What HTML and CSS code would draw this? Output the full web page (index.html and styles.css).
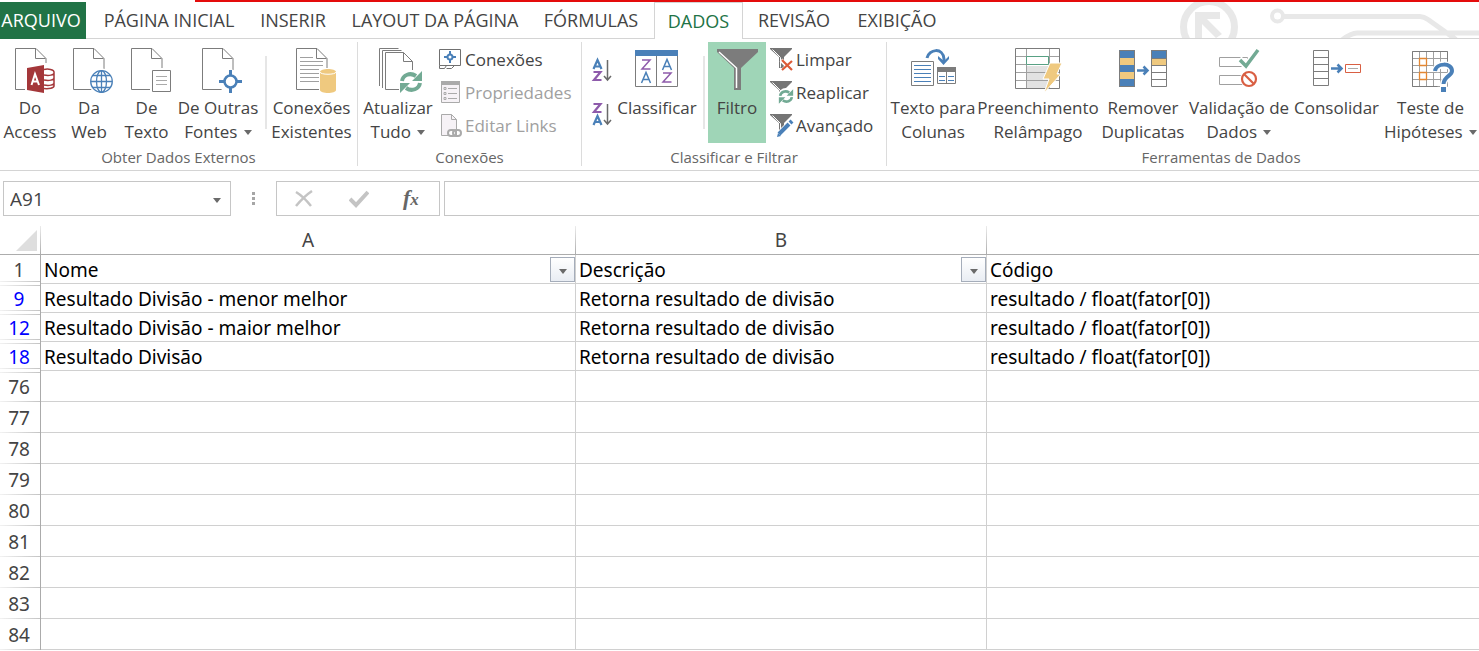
FILE: index.html
```html
<!DOCTYPE html>
<html lang="pt-BR">
<head>
<meta charset="utf-8">
<meta name="viewport" content="width=device-width, initial-scale=1">
<title>Planilha</title>
<link rel="stylesheet" href="styles.css">
</head>
<body>
<svg class="defs" aria-hidden="true">
  <defs>
    <g id="sheet"><path d="M.5 .5h20.500l10 10v31H.5z" fill="#fff" stroke="#7c7c7c"/><path d="M20.500 .5v10h10" fill="none" stroke="#7c7c7c"/></g>
    <g id="refresh"><path d="M-9-1C-8-7-1-10 5-6M9 1C8 7 1 10-5 6" fill="none" stroke="#72aa94" stroke-width="4"/><path d="M11-11v10H1zM-11 11V1H-1z" fill="#72aa94"/></g>
    <g id="funnel"><path d="M0 0h22v1l-8 8v11h-5V9L0 1z" fill="#757575"/><path d="M2.500 1.500l8 8v10" fill="none" stroke="#fff"/></g>
  </defs>
</svg>
<header>
  <div class="topline"></div>
  <nav class="tabs" aria-label="Guias">
    <button class="tab file">ARQUIVO</button>
    <button class="tab home">PÁGINA INICIAL</button>
    <button class="tab insert">INSERIR</button>
    <button class="tab layout">LAYOUT DA PÁGINA</button>
    <button class="tab formulas">FÓRMULAS</button>
    <button class="tab active">DADOS</button>
    <button class="tab review">REVISÃO</button>
    <button class="tab view">EXIBIÇÃO</button>
    <svg class="circuit" width="300" height="36" viewBox="1179 2 300 36" fill="none" stroke="#e8e8e8" aria-hidden="true">
      <circle cx="1209" cy="27" r="25.500" stroke-width="7"/>
      <path d="M1195 12h25v7h-13l15 15-6 4-14-14v14h-7z" fill="#e8e8e8" stroke="none"/>
      <circle cx="1277.500" cy="16" r="5.500" stroke-width="4"/>
      <path d="M1284 16.500h136q4 0 8 3l28 20M1479 33h-122q-6 0-15 7" stroke-width="5"/>
    </svg>
  </nav>
  <div class="ribbon">
    <section class="group external">
      <div class="tools">
        <button class="big access"><svg width="60" height="54" viewBox="0 42 60 54"><use href="#sheet" x="15" y="48"/><path d="M25 63h32v32H25z" fill="#fff"/><path d="M44 69.500c4-1 10 0 10 2.500v14c0 2-5 3-10 2.500M44 75c5 1 10 0 10-2M44 80c5 1 10 0 10-2M44 85c5 1 10 0 10-2" fill="none" stroke="#a4373a" stroke-width="1.500"/><path d="M27 68l17-3v28l-17-3z" fill="#a4373a"/><path d="M31.500 85l3.500-11 4 11M32.500 81.500h5" fill="none" stroke="#fff" stroke-width="2"/></svg><span>Do<br>Access</span></button>
        <button class="big web"><svg width="58" height="54" viewBox="60 42 58 54"><use href="#sheet" x="73" y="48"/><circle cx="101.500" cy="81.500" r="13" fill="#fff"/><g fill="none" stroke="#4a80b8" stroke-width="1.300"><circle cx="101.500" cy="81.500" r="10.800"/><ellipse cx="101.500" cy="81.500" rx="5" ry="10.800"/><path d="M101.500 71v21M91 81.500h21M93 75.500h17M93 87.500h17"/></g></svg><span>Da<br>Web</span></button>
        <button class="big text"><svg width="57" height="54" viewBox="118 42 57 54"><use href="#sheet" x="131" y="48"/><path d="M150 68h23v26h-23z" fill="#fff"/><path d="M152.500 70.500h18v21h-18z" fill="#fff" stroke="#7c7c7c"/><path d="M156 76.500h11M156 80.500h11M156 84.500h11" stroke="#aaa"/></svg><span>De<br>Texto</span></button>
        <button class="big others"><svg width="86" height="54" viewBox="175 42 86 54"><use href="#sheet" x="202" y="48"/><circle cx="230.500" cy="81.500" r="12" fill="#fff"/><circle cx="230.500" cy="81.500" r="6" fill="none" stroke="#4a80b8" stroke-width="2.500"/><path d="M230.500 70v6M230.500 87v6M219 81.500h6M236 81.500h6" stroke="#4a80b8" stroke-width="3"/></svg><span>De Outras<br>Fontes <i class="caret"></i></span></button>
        <div class="divider"></div>
        <button class="big existing"><svg width="83" height="54" viewBox="270 42 83 54"><use href="#sheet" x="296" y="48"/><path d="M300 57.500h13M300 61.500h23M300 65.500h23M300 69.500h20M300 73.500h20M300 77.500h20M300 81.500h20" stroke="#a0a0a0"/><path d="M319 68h19v26h-19z" fill="#fff"/><path d="M320 72v18c0 4 16 4 16 0V72c0-4-16-4-16 0z" fill="#efc97f"/><path d="M320 72c0 3 16 3 16 0" fill="none" stroke="#fff"/></svg><span>Conexões<br>Existentes</span></button>
      </div>
      <h2>Obter Dados Externos</h2>
    </section>
    <section class="group connections">
      <div class="tools">
        <button class="big update"><svg width="80" height="54" viewBox="358 42 80 54"><g fill="#fff" stroke="#7c7c7c"><path d="M379.500 86V48.500h19"/><path d="M382.500 88V50.500h19"/><path d="M403.500 52.500l9 9v28h-27v-37z"/><path d="M403.500 52.500v9h9" fill="none"/></g><path d="M399 70h25v25h-25z" fill="#fff"/><use href="#refresh" x="411" y="82"/></svg><span>Atualizar<br>Tudo <i class="caret"></i></span></button>
        <div class="stack">
          <button class="small"><svg width="24" height="24" viewBox="439 48 24 24"><path d="M439.500 49.500h21v16h-21zM439.500 65.500v3h5l2-3m0 3h5l3-3" fill="none" stroke="#707070"/><circle cx="450" cy="57" r="2.500" fill="none" stroke="#4a80b8" stroke-width="2"/><path d="M450 51v3M450 60v3M444 57h3M453 57h3" stroke="#4a80b8" stroke-width="2"/></svg><span>Conexões</span></button>
          <button class="small" disabled><svg width="24" height="24" viewBox="439 81 24 24"><path d="M441.500 82.500h18v20h-18z" fill="#f6f2f6" stroke="#aaa"/><path d="M441 81h19v4h-19z" fill="#aaa"/><path d="M448 88.500h9M448 93.500h9M448 98.500h9" stroke="#aaa"/><path d="M444 87.500h2v2h-2zM444 92.500h2v2h-2zM444 97.500h2v2h-2z" fill="none" stroke="#aaa"/></svg><span>Propriedades</span></button>
          <button class="small" disabled><svg width="24" height="24" viewBox="439 114 24 24"><path d="M441.500 114.500h10l5 5v16h-15z" fill="#f6f2f6" stroke="#aaa"/><path d="M451.500 114.500v5h5" fill="none" stroke="#aaa"/><g fill="#fff" stroke="#aaa" stroke-width="2"><rect x="448" y="130" width="8" height="6" rx="3"/><rect x="453" y="130" width="8" height="6" rx="3" fill="none"/></g></svg><span>Editar Links</span></button>
        </div>
      </div>
      <h2>Conexões</h2>
    </section>
    <section class="group sorting">
      <div class="tools">
        <div class="order">
          <button aria-label="Classificar de A a Z"><svg width="24" height="30" viewBox="590 56 24 30"><path d="M593.500 69l4-9 4 9M595 66.500h5" fill="none" stroke="#4a80b8" stroke-width="2.200"/><path d="M593.500 72h7l-6.500 8h7.500" fill="none" stroke="#8e5bab" stroke-width="2.200"/><path d="M607.500 60v20m-3.500-4l3.500 4 3.500-4" fill="none" stroke="#6a6a6a" stroke-width="1.500"/></svg></button>
          <button aria-label="Classificar de Z a A"><svg width="24" height="30" viewBox="590 100 24 30"><path d="M593.500 104h7l-6.500 8h7.500" fill="none" stroke="#8e5bab" stroke-width="2.200"/><path d="M593.500 125l4-9 4 9M595 122h5" fill="none" stroke="#4a80b8" stroke-width="2.200"/><path d="M607.500 104v20m-3.500-4l3.500 4 3.500-4" fill="none" stroke="#6a6a6a" stroke-width="1.500"/></svg></button>
        </div>
        <button class="big classify"><svg width="84" height="54" viewBox="615 42 84 54"><path d="M635.500 53.500h42v33h-42zM656.500 54v32" fill="#fff" stroke="#7c7c7c"/><path d="M635 50h43v6h-43z" fill="#4a80b8"/><g fill="none" stroke="#8e5bab" stroke-width="1.500"><path d="M642 60h8l-8 9h8.500M663 73h8l-8 9h8.500"/></g><g fill="none" stroke="#4a80b8" stroke-width="1.500"><path d="M641.500 83l4.500-10.500 4.500 10.500M643 79.500h6M662.500 70l4.500-10.500 4.500 10.500M664 66.500h6"/></g></svg><span>Classificar</span></button>
        <div class="divider"></div>
        <button class="big filter" aria-pressed="true"><svg width="58" height="54" viewBox="708 42 58 54"><path d="M717 49h41v3l-17 16v22h-7V68l-17-16z" fill="#7c7c7c"/><path d="M719 52l17.500 16v20" fill="none" stroke="#fff" stroke-width="1.500"/></svg><span>Filtro</span></button>
        <div class="stack">
          <button class="small"><svg width="24" height="24" viewBox="770 48 24 24"><use href="#funnel" x="770" y="48"/><path d="M781 60l12 12m0-12l-12 12" stroke="#fff" stroke-width="4"/><path d="M782 60l10 10m0-9l-10 9" stroke="#dc5b38" stroke-width="2.200"/></svg><span>Limpar</span></button>
          <button class="small"><svg width="24" height="24" viewBox="770 81 24 24"><use href="#funnel" x="770" y="81"/><circle cx="786" cy="96" r="8" fill="#fff"/><use href="#refresh" transform="translate(786 96.500) scale(.65)"/></svg><span>Reaplicar</span></button>
          <button class="small"><svg width="24" height="24" viewBox="770 114 24 24"><use href="#funnel" x="770" y="114"/><path d="M777 137l15-15" stroke="#fff" stroke-width="7"/><path d="M779 134l10-10" stroke="#4a80b8" stroke-width="4"/><path d="M790 123l2-2" stroke="#4a80b8" stroke-width="4"/><path d="M777 137l1-4 3 3z" fill="#4a80b8"/></svg><span>Avançado</span></button>
        </div>
      </div>
      <h2>Classificar e Filtrar</h2>
    </section>
    <section class="group data">
      <div class="tools">
        <button class="big columns"><svg width="92" height="54" viewBox="887 42 92 54"><path d="M911.500 61.500h22v24h-22z" fill="#fff" stroke="#7c7c7c"/><path d="M914 65.500h17M914 69.500h17M914 73.500h17M914 77.500h17M914 81.500h17" stroke="#4a80b8"/><path d="M937.500 68.500h18v15h-18zM946.500 70v13" fill="#fff" stroke="#7c7c7c"/><path d="M937 67h19v5h-19z" fill="#7c7c7c"/><path d="M939 76.500h6M948 76.500h6M939 80.500h6M948 80.500h6" stroke="#4a80b8"/><path d="M927 58c2-9 16-11 17 1v2" fill="none" stroke="#4a80b8" stroke-width="3"/><path d="M938 56l6 5 5-5v3l-5.500 6-5.500-6z" fill="#4a80b8"/></svg><span>Texto para<br>Colunas</span></button>
        <button class="big flash"><svg width="118" height="54" viewBox="979 42 118 54"><path d="M1015.500 48.500h44v40h-44z" fill="#fff" stroke="#7c7c7c"/><path d="M1027 66h22v22h-22z" fill="#e2e2e2"/><path d="M1026.500 49v39M1049.500 49v39M1016 56.500h43M1016 64.500h43M1016 72.500h43M1016 80.500h43" stroke="#a0a0a0"/><path d="M1026.500 56.500h22v8h-22z" fill="#fff" stroke="#58a184"/><path d="M1050 63h12l-5 11h4l-17 19 5-14h-6z" fill="#efc97f" stroke="#fff"/></svg><span>Preenchimento<br>Relâmpago</span></button>
        <button class="big dedupe"><svg width="92" height="54" viewBox="1097 42 92 54"><path d="M1119 50h16v8h-16zM1119 65h16v7h-16zM1119 79h16v8h-16zM1151 50h16v8h-16z" fill="#4a80b8"/><path d="M1119 58h16v7h-16zM1119 72h16v7h-16zM1151 58h16v7h-16z" fill="#efc97f"/><path d="M1119.500 50.500h15v36h-15zM1151.500 50.500h15v36h-15zM1151 58.500h16M1151 65.500h16M1151 72.500h16M1151 79.500h16" fill="none" stroke="#7c7c7c"/><path d="M1137 70.500h10m-3.500-4l4 4-4 4" fill="none" stroke="#4a80b8" stroke-width="2.500"/></svg><span>Remover<br>Duplicatas</span></button>
        <button class="big validate"><svg width="100" height="54" viewBox="1189 42 100 54"><path d="M1219.500 57.500h28v9h-28zM1219.500 75.500h28v9h-28z" fill="#fff" stroke="#a0a0a0"/><path d="M1239 59l7 7 13-16" fill="none" stroke="#fff" stroke-width="7"/><path d="M1240 60l6 6 12-16" fill="none" stroke="#72aa94" stroke-width="3.500"/><circle cx="1249" cy="79" r="9" fill="#fff"/><path d="M1244 74l10 10" stroke="#d95f43" stroke-width="2.200"/><circle cx="1249" cy="79" r="7" fill="none" stroke="#d95f43" stroke-width="2.200"/></svg><span>Validação de<br>Dados <i class="caret"></i></span></button>
        <button class="big consolidate"><svg width="95" height="54" viewBox="1289 42 95 54"><path d="M1313.500 50.500h15v35h-15zM1314 57.500h14M1314 64.500h14M1314 71.500h14M1314 78.500h14" fill="#fff" stroke="#7c7c7c"/><path d="M1331 68.500h10m-3.500-4l4 4-4 4" fill="none" stroke="#4a80b8" stroke-width="2.500"/><path d="M1345.500 64.500h15v8h-15z" fill="#fff" stroke="#d95f43"/><path d="M1348 68.500h10" stroke="#aaa"/></svg><span>Consolidar</span></button>
        <button class="big whatif"><svg width="93" height="54" viewBox="1384 42 93 54"><path d="M1412.500 51.500h35v35h-35zM1419.500 52v34M1426.500 52v34M1433.500 52v34M1440.500 52v34M1413 58.500h34M1413 65.500h34M1413 72.500h34M1413 79.500h34" fill="#fff" stroke="#a0a0a0"/><path d="M1447.500 62V51.500h-35v35h25" fill="none" stroke="#7c7c7c"/><path d="M1419.500 58.500h7v7h-7zM1419.500 72.500h7v7h-7z" fill="#fff" stroke="#e38732" stroke-width="1.300"/><path d="M1435 72c1-10 17-9 17-1 0 6-8 5-8.500 13v8" fill="none" stroke="#fff" stroke-width="7"/><path d="M1435 71c1-8 17-9 17 0 0 5-8 5-8.500 13" fill="none" stroke="#4a80b8" stroke-width="4"/><path d="M1441 87h5v5h-5z" fill="#4a80b8"/></svg><span>Teste de<br>Hipóteses <i class="caret"></i></span></button>
      </div>
      <h2>Ferramentas de Dados</h2>
    </section>
  </div>
</header>
<div class="formula-bar">
  <div class="name-box"><input aria-label="Caixa de nome" value="A91"><button aria-label="Abrir lista de nomes"><i class="caret"></i></button></div>
  <div class="grip"><i></i><i></i><i></i></div>
  <div class="actions">
    <button aria-label="Cancelar"><svg width="20" height="20" viewBox="0 0 20 20" fill="none" stroke="#c4c4c4" stroke-width="2.500"><path d="M2 3c5 3 11 9 15 14M18 2C12 6 7 11 2 17"/></svg></button>
    <button aria-label="Inserir"><svg width="20" height="20" viewBox="0 0 20 20" fill="none" stroke="#c4c4c4" stroke-width="4"><path d="M1 10l6 6L19 3"/></svg></button>
    <button class="fx" aria-label="Inserir função">f<sub>x</sub></button>
  </div>
  <input class="formula" aria-label="Barra de fórmulas">
</div>
<table class="grid">
  <colgroup><col class="c-num"><col class="c-a"><col class="c-b"><col></colgroup>
  <thead><tr><th class="corner"><svg width="21" height="21" viewBox="0 0 21 21"><path d="M21 0v21H0z" fill="#dedede"/></svg></th><th>A</th><th>B</th><th></th></tr></thead>
  <tbody>
    <tr class="short first"><th>1</th><td><div class="cell">Nome<button class="drop" aria-label="Filtrar Nome"><i class="caret"></i></button></div></td><td><div class="cell">Descrição<button class="drop" aria-label="Filtrar Descrição"><i class="caret"></i></button></div></td><td>Código</td></tr>
    <tr class="short found"><th>9</th><td>Resultado Divisão - menor melhor</td><td>Retorna resultado de divisão</td><td>resultado / float(fator[0])</td></tr>
    <tr class="short found"><th>12</th><td>Resultado Divisão - maior melhor</td><td>Retorna resultado de divisão</td><td>resultado / float(fator[0])</td></tr>
    <tr class="short found"><th>18</th><td>Resultado Divisão</td><td>Retorna resultado de divisão</td><td>resultado / float(fator[0])</td></tr>
    <tr class="after"><th>76</th><td></td><td></td><td></td></tr>
    <tr><th>77</th><td></td><td></td><td></td></tr>
    <tr><th>78</th><td></td><td></td><td></td></tr>
    <tr><th>79</th><td></td><td></td><td></td></tr>
    <tr><th>80</th><td></td><td></td><td></td></tr>
    <tr><th>81</th><td></td><td></td><td></td></tr>
    <tr><th>82</th><td></td><td></td><td></td></tr>
    <tr><th>83</th><td></td><td></td><td></td></tr>
    <tr><th>84</th><td></td><td></td><td></td></tr>
  </tbody>
</table>
</body>
</html>
```

FILE: styles.css
```css
* { box-sizing: border-box; }
body {
  margin: 0;
  background: #fff;
  color: #444;
  font-family: "Open Sans", "Noto Sans", sans-serif;
  font-size: 17px;
  overflow-x: hidden;
}
button, input { font: inherit; color: inherit; border: 0; padding: 0; background: none; }
svg { display: block; flex: none; }
.defs { position: absolute; width: 0; height: 0; }

.topline { height: 2px; margin-left: 195px; background: #e40c0c; }
.tabs { display: flex; height: 37px; border-bottom: 1px solid #d4d4d4; font-size: 18px; }
.tab { flex: none; height: 36px; padding-bottom: 1px; white-space: nowrap; }
.file { width: 86px; height: 37px; padding-right: 4px; margin-right: 5px; background: #217346; color: #fff; }
.home { width: 156px; }
.insert { width: 92px; }
.layout { width: 192px; }
.formulas { width: 120px; margin-right: 3px; }
.active { width: 89px; height: 37px; border: 1px solid #d4d4d4; border-bottom: 0; background: #fff; color: #217346; }
.review { width: 102px; }
.view { width: 104px; }
.circuit { margin-left: auto; }

.ribbon { display: flex; padding: 3px 0 4px; border-bottom: 1px solid #d4d4d4; }
.group { flex: none; border-right: 1px solid #dcdcdc; }
.group h2 { margin: 0; padding-top: 5px; font-size: 15px; font-weight: 400; line-height: 18px; text-align: center; color: #666; }
.tools { display: flex; height: 101px; }
.external { width: 358px; }
.connections { width: 224px; }
.sorting { width: 305px; }
.data { flex: 1 0 auto; border-right: 0; }
.data h2 { padding-left: 76px; }
.big { display: flex; flex: none; flex-direction: column; align-items: center; line-height: 24px; text-align: center; white-space: nowrap; }
.big span { display: block; }
.caret { display: inline-block; margin-left: 2px; border: 4px solid transparent; border-top: 5px solid #6a6a6a; border-bottom: 0; vertical-align: 3px; }
.access { width: 60px; }
.web { width: 58px; }
.text { width: 57px; }
.others { width: 86px; }
.divider { width: 2px; height: 73px; margin: 14px 3px 0 4px; background: #e6e6e6; }
.existing { width: 83px; }
.update { width: 80px; }
.classify { width: 84px; }
.filter { width: 58px; background: #9fd5b7; }
.columns, .dedupe { width: 92px; }
.flash { width: 118px; }
.validate { width: 100px; }
.consolidate { width: 95px; }
.whatif { width: 93px; }
.stack { display: flex; flex-direction: column; padding-top: 1px; }
.filter + .stack { margin-left: 4px; }
.update + .stack { margin-left: 1px; }
.small { display: flex; align-items: center; gap: 2px; height: 33px; white-space: nowrap; }
.small:disabled { color: #a0a0a0; }
.order { display: flex; flex-direction: column; gap: 14px; padding: 14px 1px 0 8px; }

.formula-bar { display: flex; padding: 10px 0 10px 3px; font-size: 19px; }
.name-box { display: flex; flex: none; align-items: center; width: 228px; height: 35px; border: 1px solid #c6c6c6; }
.name-box input { flex: 1; min-width: 0; padding-left: 6px; }
.name-box button { width: 28px; }
.grip { display: flex; flex: none; flex-direction: column; align-items: center; justify-content: center; gap: 2px; width: 45px; }
.grip i { width: 3px; height: 3px; background: #a6a6a6; }
.actions { display: flex; flex: none; align-items: center; justify-content: space-around; width: 164px; margin-right: 4px; padding-right: 3px; border: 1px solid #c6c6c6; }
.fx { font: italic bold 22px/24px "Liberation Serif", serif; color: #666; }
.fx sub { font-size: 17px; vertical-align: baseline; }
.formula { flex: 1; min-width: 0; border: 1px solid #c6c6c6; border-right: 0; padding: 0 6px; }

.grid { width: 100%; table-layout: fixed; border-collapse: separate; border-spacing: 0; font-family: "Noto Sans", sans-serif; font-size: 19px; line-height: 20px; }
.c-num { width: 41px; }
.c-a { width: 535px; }
.c-b { width: 411px; }
.grid th { padding: 0; font-weight: 400; }
.grid thead th { height: 29px; border-right: 1px solid; border-bottom: 1px solid #ababab; border-image: linear-gradient(#eee, #ababab) 1; border-width: 0 1px 1px 0; }
.grid thead th:last-child { border-right: 0; }
.grid .corner svg { margin: 0 0 0 16px; }
.grid td { height: 31px; padding: 1px 0 0 3px; border-right: 1px solid #d0d0d0; border-bottom: 1px solid #d0d0d0; color: #000; white-space: nowrap; }
.grid td:last-child { border-right: 0; }
.grid .short td { height: 29px; }
.grid tbody th {
  padding-right: 2px;
  border-right: 1px solid #ababab;
  background: linear-gradient(90deg, #f2f2f2, #c4c4c4) 0 100% / 100% 1px no-repeat;
}
.grid .short th {
  background:
    linear-gradient(90deg, #f2f2f2, #c4c4c4) 0 26px / 100% 1px no-repeat,
    linear-gradient(90deg, #f2f2f2, #c4c4c4) 0 1px / 100% 1px no-repeat;
}
.grid .first th { background: linear-gradient(90deg, #f2f2f2, #c4c4c4) 0 26px / 100% 1px no-repeat; }
.grid .after th {
  background:
    linear-gradient(90deg, #f2f2f2, #c4c4c4) 0 100% / 100% 1px no-repeat,
    linear-gradient(90deg, #f2f2f2, #c4c4c4) 0 1px / 100% 1px no-repeat;
}
.grid .found th { color: #00f; }
.cell { display: flex; align-items: center; justify-content: space-between; height: 27px; }
.drop { width: 25px; height: 25px; border: 1px solid #a5adba; background: linear-gradient(#fff, #e9edf3); line-height: 20px; }
.drop .caret { margin: 0; }
```
